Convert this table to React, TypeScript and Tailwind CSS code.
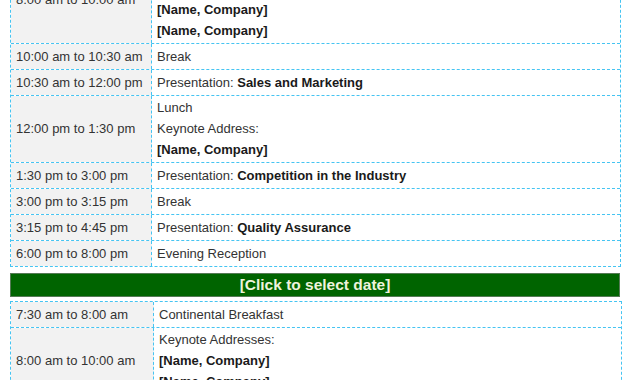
import React from "react";

type Row = { time: string; lines: React.ReactNode[]; multi?: boolean };

const B = ({ children }: { children: React.ReactNode }) => (
  <span className="font-bold text-[#1a1a1a]">{children}</span>
);

const table1: Row[] = [
  {
    time: "8:00 am to 10:00 am",
    lines: [
      "Keynote Addresses:",
      <B>[Name, Company]</B>,
      <B>[Name, Company]</B>,
      <B>[Name, Company]</B>,
    ],
    multi: true,
  },
  { time: "10:00 am to 10:30 am", lines: ["Break"] },
  {
    time: "10:30 am to 12:00 pm",
    lines: [
      <>
        Presentation: <B>Sales and Marketing</B>
      </>,
    ],
  },
  {
    time: "12:00 pm to 1:30 pm",
    lines: ["Lunch", "Keynote Address:", <B>[Name, Company]</B>],
    multi: true,
  },
  {
    time: "1:30 pm to 3:00 pm",
    lines: [
      <>
        Presentation: <B>Competition in the Industry</B>
      </>,
    ],
  },
  { time: "3:00 pm to 3:15 pm", lines: ["Break"] },
  {
    time: "3:15 pm to 4:45 pm",
    lines: [
      <>
        Presentation: <B>Quality Assurance</B>
      </>,
    ],
  },
  { time: "6:00 pm to 8:00 pm", lines: ["Evening Reception"] },
];

const table2: Row[] = [
  { time: "7:30 am to 8:00 am", lines: ["Continental Breakfast"] },
  {
    time: "8:00 am to 10:00 am",
    lines: ["Keynote Addresses:", <B>[Name, Company]</B>, <B>[Name, Company]</B>],
    multi: true,
  },
];

function Table({ rows, timeW }: { rows: Row[]; timeW: string }) {
  return (
    <div className="border border-dashed border-[#45c4f2]">
      {rows.map((r, i) => (
        <div
          key={i}
          className={
            "flex " + (i > 0 ? "border-t border-dashed border-[#45c4f2]" : "")
          }
        >
          <div
            className={
              timeW +
              " shrink-0 bg-[#f2f2f2] border-r border-dashed border-[#45c4f2] pl-[5px] flex items-center"
            }
          >
            {r.time}
          </div>
          <div
            className={
              "flex-1 pl-[5px] leading-[21px] " +
              (r.multi ? "pt-[1px] pb-[2px]" : "py-[2px]")
            }
          >
            {r.lines.map((l, j) => (
              <div key={j}>{l}</div>
            ))}
          </div>
        </div>
      ))}
    </div>
  );
}

export default function App() {
  return (
    <div className="w-[630px] h-[380px] overflow-hidden bg-white font-['Liberation_Sans',Arial,sans-serif] text-[13px] text-[#333333]">
      <div className="pl-[10px] pr-[9px] -mt-[45px]">
        <Table rows={table1} timeW="w-[141px]" />
        <div className="mt-[6px] mr-[1px] h-[24px] bg-[#006400] border border-[#557a55] flex items-center justify-center text-[15.5px] font-bold text-[#eef3dc]">
          [Click to select date]
        </div>
        <div className="mt-[4px] mr-[-1px]">
          <Table rows={table2} timeW="w-[143px]" />
        </div>
      </div>
    </div>
  );
}
